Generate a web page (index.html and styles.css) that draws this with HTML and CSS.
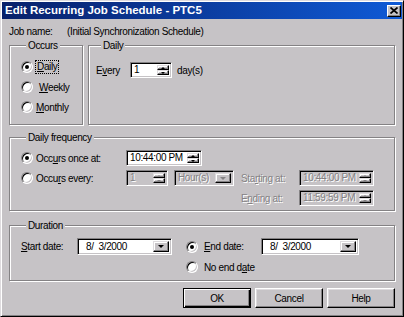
FILE: index.html
```html
<!DOCTYPE html>
<html lang="en">
<head>
    <meta charset="UTF-8">
    <title>Edit Recurring Job Schedule</title>
    <link rel="stylesheet" href="styles.css">
</head>
<body>
    <div class="window">
        <div class="titlebar">
            <span class="title">Edit Recurring Job Schedule - PTC5</span>
            <span class="close-btn">
                <svg width="8" height="7" viewBox="0 0 8 7"><path d="M0.5 0.5L7.5 6.5M7.5 0.5L0.5 6.5" stroke="#000" stroke-width="1.7"/></svg>
            </span>
        </div>
        <div class="content">
            <div class="job-row">
                <span class="job-label">Job name:</span>
                <span>(Initial Synchronization Schedule)</span>
            </div>

            <div class="top-groups">
                <fieldset class="group occurs">
                    <legend>Occurs</legend>
                    <div class="radio-row"><span class="radio checked"></span><span class="focus"><u>D</u>aily</span></div>
                    <div class="radio-row"><span class="radio"></span><span class="indent"><u>W</u>eekly</span></div>
                    <div class="radio-row"><span class="radio"></span><span><u>M</u>onthly</span></div>
                </fieldset>
                <fieldset class="group daily">
                    <legend>Daily</legend>
                    <div class="every-row">
                        <span class="every-label">E<u>v</u>ery</span>
                        <div class="edit every-edit">
                            <span>1</span>
                            <span class="spin"><b class="up"></b><b class="down"></b></span>
                        </div>
                        <span class="unit">day(s)</span>
                    </div>
                </fieldset>
            </div>

            <fieldset class="group freq">
                <legend>Daily frequency</legend>
                <div class="freq-grid">
                    <div class="radio-row"><span class="radio checked"></span><span>Occ<u>u</u>rs once at:</span></div>
                    <div class="edit time-edit">
                        <span>10:44:00 PM</span>
                        <span class="spin"><b class="up"></b><b class="down"></b></span>
                    </div>
                    <div class="cell-empty"></div>
                    <div class="cell-empty"></div>

                    <div class="radio-row"><span class="radio"></span><span>Occu<u>r</u>s every:</span></div>
                    <div class="edit disabled count-edit">
                        <span>1</span>
                        <span class="spin"><b class="up"></b><b class="down"></b></span>
                    </div>
                    <div class="combo disabled hour-combo">
                        <span>Hour(s)</span>
                        <span class="drop"></span>
                    </div>
                    <span class="disabled">Sta<u>r</u>ting at:</span>
                    <div class="edit disabled">
                        <span>10:44:00 PM</span>
                        <span class="spin"><b class="up"></b><b class="down"></b></span>
                    </div>

                    <span class="disabled end-label">E<u>n</u>ding at:</span>
                    <div class="edit disabled">
                        <span>11:59:59 PM</span>
                        <span class="spin"><b class="up"></b><b class="down"></b></span>
                    </div>
                </div>
            </fieldset>

            <fieldset class="group duration">
                <legend>Duration</legend>
                <div class="dur-grid">
                    <span><u>S</u>tart date:</span>
                    <div class="combo date-combo">
                        <span class="date">8/  3/2000</span>
                        <span class="drop"></span>
                    </div>
                    <div class="radio-row end-radio"><span class="radio checked"></span><span><u>E</u>nd date:</span></div>
                    <div class="combo date-combo">
                        <span class="date">8/  3/2000</span>
                        <span class="drop"></span>
                    </div>
                    <div class="radio-row no-end"><span class="radio"></span><span>No end d<u>a</u>te</span></div>
                </div>
            </fieldset>

            <div class="buttons">
                <div class="btn default">OK</div>
                <div class="btn">Cancel</div>
                <div class="btn">Help</div>
            </div>
        </div>
    </div>
</body>
</html>
```

FILE: styles.css
```css
body {
    margin: 0;
    font-family: "Liberation Sans", Arial, sans-serif;
    font-size: 10px;
    letter-spacing: -0.35px;
    color: #000;
    background-color: #c6c3c6;
}

.window {
    width: 404px;
    height: 317px;
    box-sizing: border-box;
    padding: 1px;
    background-color: #c6c3c6;
    border: 1px solid;
    border-color: #dedbde #000 #000 #dedbde;
    box-shadow: inset 1px 1px 0 #fff, inset -1px -1px 0 #848284;
    display: flex;
    flex-direction: column;
}

.titlebar {
    height: 17px;
    flex-shrink: 0;
    display: flex;
    align-items: center;
    justify-content: space-between;
    padding: 0 2px 0 3px;
    background: linear-gradient(to right, #08206a, #0f5ad6);
    color: #fff;
}

.title {
    font-weight: bold;
    font-size: 11.5px;
    letter-spacing: 0;
    line-height: 17px;
}

.close-btn {
    width: 14px;
    height: 12px;
    box-sizing: border-box;
    margin-right: -1px;
    background-color: #c6c3c6;
    border: 1px solid;
    border-color: #fff #000 #000 #fff;
    box-shadow: inset -1px -1px 0 #848284;
    display: flex;
    align-items: center;
    justify-content: center;
}

.close-btn svg {
    display: block;
}

.content {
    flex: 1;
    padding: 0 7px;
    display: flex;
    flex-direction: column;
}

.job-row {
    margin-top: 6px;
    height: 13px;
    line-height: 13px;
    display: flex;
}

.job-label {
    width: 58px;
}

/* group boxes */
.group {
    margin: 0;
    padding: 0;
    min-width: 0;
    box-sizing: border-box;
    border: 1px solid #848284;
    box-shadow: inset 1px 1px 0 #fff, 1px 1px 0 #fff;
}

.group legend {
    padding: 0 2px;
    margin-left: 5px;
    line-height: 13px;
    background-color: #c6c3c6;
}

.top-groups {
    display: flex;
    gap: 5px;
    margin-top: 1px;
}

.occurs {
    width: 74px;
    height: 86px;
    padding: 8px 0 0 11px;
    display: flex;
    flex-direction: column;
    gap: 6px;
}

.daily {
    flex: 1;
    height: 86px;
    padding: 10px 0 0 7px;
}

.freq {
    height: 80px;
    margin-top: 6px;
    padding: 6px 0 0 11px;
}

.duration {
    height: 62px;
    margin-top: 8px;
    padding: 6px 0 0 11px;
}

/* radio buttons */
.radio-row {
    display: flex;
    align-items: center;
    height: 14px;
    gap: 3px;
    white-space: nowrap;
}

.radio {
    width: 12px;
    height: 12px;
    box-sizing: border-box;
    flex-shrink: 0;
    border-radius: 50%;
    background-color: #fff;
    border: 1px solid;
    border-color: #848284 #fff #fff #848284;
    box-shadow: inset 1px 1px 0 #000, inset -1px -1px 0 #c6c3c6;
    display: flex;
    align-items: center;
    justify-content: center;
}

.radio.checked::after {
    content: "";
    width: 4px;
    height: 4px;
    border-radius: 50%;
    background-color: #000;
}

.focus {
    outline: 1px dotted #000;
    padding: 0 1px;
    line-height: 12px;
}

.indent {
    padding-left: 3px;
}

/* edit boxes */
.every-row {
    display: flex;
    align-items: center;
    height: 16px;
}

.every-label {
    width: 34px;
}

.edit,
.combo {
    height: 16px;
    box-sizing: border-box;
    background-color: #fff;
    border: 1px solid;
    border-color: #848284 #fff #fff #848284;
    box-shadow: inset 1px 1px 0 #000, inset -1px -1px 0 #c6c3c6;
    display: flex;
    align-items: center;
    padding: 2px 2px 2px 3px;
    line-height: 12px;
    white-space: nowrap;
}

.every-edit {
    width: 42px;
}

.time-edit {
    grid-column: span 2;
    width: 76px;
}

.count-edit {
    width: 42px;
}

.hour-combo {
    width: 60px;
}

.unit {
    margin-left: 5px;
}

.spin {
    margin-left: auto;
    width: 12px;
    align-self: stretch;
    display: flex;
    flex-direction: column;
}

.spin b,
.drop {
    flex: 1;
    box-sizing: border-box;
    background-color: #c6c3c6;
    border: 1px solid;
    border-color: #dedbde #000 #000 #dedbde;
    box-shadow: inset -1px -1px 0 #848284, inset 1px 1px 0 #fff;
    display: flex;
    align-items: center;
    justify-content: center;
}

.spin .up::after {
    content: "";
    border-left: 2px solid transparent;
    border-right: 2px solid transparent;
    border-bottom: 2px solid #000;
}

.spin .down::after {
    content: "";
    border-left: 2px solid transparent;
    border-right: 2px solid transparent;
    border-top: 2px solid #000;
}

.drop {
    flex: none;
    margin-left: auto;
    width: 16px;
    align-self: stretch;
}

.drop::after {
    content: "";
    border-left: 3px solid transparent;
    border-right: 3px solid transparent;
    border-top: 3px solid #000;
}

.disabled {
    color: #848284;
    text-shadow: 1px 1px 0 #fff;
}

.edit.disabled,
.combo.disabled {
    background-color: #c6c3c6;
}

.disabled .spin .up::after {
    border-bottom-color: #848284;
}

.disabled .spin .down::after,
.disabled .drop::after {
    border-top-color: #848284;
}

/* daily frequency layout */
.freq-grid {
    display: grid;
    grid-template-columns: 105px 48px 67px 58px 75px;
    grid-template-rows: 16px 16px 16px;
    row-gap: 4px;
    align-items: center;
}

.end-label {
    grid-column: 4;
}

/* duration layout */
.dur-grid {
    display: grid;
    grid-template-columns: 56px 95px 14px 75px 98px;
    grid-template-rows: 17px 14px;
    row-gap: 5px;
    align-items: center;
}

.date-combo {
    height: 17px;
    padding-left: 8px;
}

.date {
    white-space: pre;
}

.end-radio {
    grid-column: 4;
    gap: 6px;
}

.no-end {
    grid-column: 4 / span 2;
    gap: 6px;
}

/* buttons */
.buttons {
    margin-top: 7px;
    display: flex;
    justify-content: flex-end;
    gap: 4px;
}

.btn {
    width: 68px;
    height: 20px;
    box-sizing: border-box;
    border: 1px solid;
    border-color: #fff #000 #000 #fff;
    box-shadow: inset -1px -1px 0 #848284, inset 1px 1px 0 #dedbde;
    display: flex;
    align-items: center;
    justify-content: center;
}

.btn.default {
    border-color: #000;
    box-shadow: inset 1px 1px 0 #fff, inset -1px -1px 0 #000, inset -2px -2px 0 #848284;
}
```
